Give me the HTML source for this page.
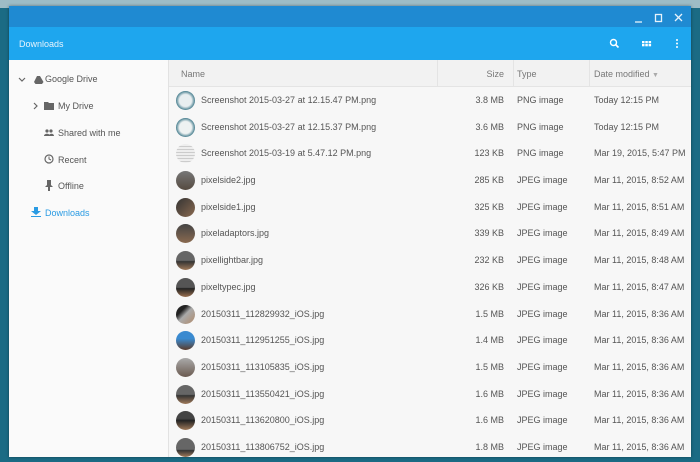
<!DOCTYPE html>
<html><head><style>
*{margin:0;padding:0;box-sizing:border-box}
body{width:700px;height:462px;overflow:hidden;background:#1b6b84;font-family:"Liberation Sans",sans-serif;position:relative}
.topbg{position:absolute;left:0;top:0;width:700px;height:8px;background:#9dbcc6}
.win{position:absolute;left:9px;top:6px;width:682px;height:451px;background:#f7f7f7;overflow:hidden;box-shadow:0 0 3px rgba(0,0,0,.4)}
.title{height:21px;background:#1f8ad2;position:relative}
.tool{height:33px;background:#1ea6ee;position:relative;color:#e8f4fd;font-size:9px}
.tool span{position:absolute;left:10px;top:12px}
.side{position:absolute;left:0;top:54px;width:160px;bottom:0;background:#fafafa;border-right:1px solid #e2e2e2;font-size:9px;color:#555}
.side div{position:absolute;white-space:nowrap}
.main{position:absolute;left:160px;top:54px;right:0;bottom:0}
.hdr{height:27px;background:#f2f2f2;border-bottom:1px solid #e4e4e4;position:relative;font-size:9px;color:#777}
.hdr div,.row div{position:absolute;white-space:nowrap}
.sep{width:1px;height:27px;background:#e4e4e4;top:0}
.row{height:26.7px;position:relative;font-size:9px;color:#555}
.th{left:7px;top:4px;width:19px;height:19px;border-radius:50%}
.n{left:32px;top:8px}.s{right:187px;top:8px}.t{left:348px;top:8px}.d{left:425px;top:8px}
</style></head><body>
<div class="topbg"></div>
<div class="win">
<div class="title">
<svg style="position:absolute;left:624px;top:7px" width="50" height="10" viewBox="0 0 50 10"><path d="M2 9h7" stroke="#e6f2fb" stroke-width="1.3"/><rect x="22.5" y="1.5" width="6" height="7" fill="none" stroke="#e6f2fb" stroke-width="1.3"/><path d="M42 1l7 7M49 1l-7 7" stroke="#e6f2fb" stroke-width="1.3"/></svg>
</div>
<div class="tool"><span>Downloads</span>
<svg style="position:absolute;left:600px;top:11px" width="80" height="12" viewBox="0 0 80 12"><circle cx="4.5" cy="4.5" r="3" fill="none" stroke="#fff" stroke-width="1.4"/><path d="M6.5 6.5l3 3" stroke="#fff" stroke-width="1.6"/><g fill="#fff"><rect x="33" y="3" width="2.5" height="2.3"/><rect x="36.3" y="3" width="2.5" height="2.3"/><rect x="39.6" y="3" width="2.5" height="2.3"/><rect x="33" y="6" width="2.5" height="2.3"/><rect x="36.3" y="6" width="2.5" height="2.3"/><rect x="39.6" y="6" width="2.5" height="2.3"/><circle cx="68" cy="2" r="1"/><circle cx="68" cy="5.5" r="1"/><circle cx="68" cy="9" r="1"/></g></svg>
</div>
<div class="side">
<svg style="position:absolute;left:9px;top:15px" width="30" height="10" viewBox="0 0 30 10"><path d="M1 3l3 3 3-3" fill="none" stroke="#666" stroke-width="1.2"/><path d="M19 1h3l3.5 6-1.5 2h-6.5L16 7z" fill="#666"/></svg>
<div style="left:36px;top:14px">Google Drive</div>
<svg style="position:absolute;left:23px;top:41px" width="30" height="10" viewBox="0 0 30 10"><path d="M2 2l3 3-3 3" fill="none" stroke="#666" stroke-width="1.2"/><path d="M12 1h4l1 1h5v7h-10z" fill="#666"/></svg>
<div style="left:49px;top:41px">My Drive</div>
<svg style="position:absolute;left:35px;top:69px" width="10" height="8" viewBox="0 0 10 8"><circle cx="3" cy="2" r="1.6" fill="#666"/><circle cx="7" cy="2" r="1.6" fill="#666"/><path d="M0 7c0-3 6-3 6 0zM5 7c0-3 5-3 5 0z" fill="#666"/></svg>
<div style="left:49px;top:68px">Shared with me</div>
<svg style="position:absolute;left:35px;top:94px" width="10" height="10"><circle cx="5" cy="5" r="4" fill="none" stroke="#666" stroke-width="1.2"/><path d="M5 2.5V5l2 1" fill="none" stroke="#666"/></svg>
<div style="left:49px;top:95px">Recent</div>
<svg style="position:absolute;left:36px;top:120px" width="8" height="11"><path d="M2 0h4v5l2 2H5v4H3V7H0l2-2z" fill="#666"/></svg>
<div style="left:49px;top:121px">Offline</div>
<svg style="position:absolute;left:22px;top:147px" width="10" height="10"><path d="M3 0h4v4h3L5 8 0 4h3zM0 9h10v1H0z" fill="#2a9be3"/></svg>
<div style="left:36px;top:148px;color:#2a9be3">Downloads</div>
</div>
<div class="main">
<div class="hdr"><div style="left:12px;top:9px">Name</div><div class="sep" style="left:268px"></div><div style="right:187px;top:9px">Size</div><div class="sep" style="left:344px"></div><div style="left:348px;top:9px">Type</div><div class="sep" style="left:420px"></div><div style="left:425px;top:9px">Date modified <span style="color:#aaa;font-size:7px">▼</span></div></div>
<div class="row"><div class="th" style="background:radial-gradient(#e8eef0 45%,#4a8090 70%,#ddd)"></div><div class="n">Screenshot 2015-03-27 at 12.15.47 PM.png</div><div class="s">3.8 MB</div><div class="t">PNG image</div><div class="d">Today 12:15 PM</div></div>
<div class="row"><div class="th" style="background:radial-gradient(#eef2f2 45%,#4a8090 70%,#ddd)"></div><div class="n">Screenshot 2015-03-27 at 12.15.37 PM.png</div><div class="s">3.6 MB</div><div class="t">PNG image</div><div class="d">Today 12:15 PM</div></div>
<div class="row"><div class="th" style="background:repeating-linear-gradient(#eee 0 2px,#ccc 2px 3px)"></div><div class="n">Screenshot 2015-03-19 at 5.47.12 PM.png</div><div class="s">123 KB</div><div class="t">PNG image</div><div class="d">Mar 19, 2015, 5:47 PM</div></div>
<div class="row"><div class="th" style="background:linear-gradient(#777,#554a40)"></div><div class="n">pixelside2.jpg</div><div class="s">285 KB</div><div class="t">JPEG image</div><div class="d">Mar 11, 2015, 8:52 AM</div></div>
<div class="row"><div class="th" style="background:linear-gradient(135deg,#333,#8a6a50)"></div><div class="n">pixelside1.jpg</div><div class="s">325 KB</div><div class="t">JPEG image</div><div class="d">Mar 11, 2015, 8:51 AM</div></div>
<div class="row"><div class="th" style="background:linear-gradient(#444,#8a6a50)"></div><div class="n">pixeladaptors.jpg</div><div class="s">339 KB</div><div class="t">JPEG image</div><div class="d">Mar 11, 2015, 8:49 AM</div></div>
<div class="row"><div class="th" style="background:linear-gradient(#666 50%,#333 55%,#a07a5a)"></div><div class="n">pixellightbar.jpg</div><div class="s">232 KB</div><div class="t">JPEG image</div><div class="d">Mar 11, 2015, 8:48 AM</div></div>
<div class="row"><div class="th" style="background:linear-gradient(#555 50%,#222 55%,#9a7050)"></div><div class="n">pixeltypec.jpg</div><div class="s">326 KB</div><div class="t">JPEG image</div><div class="d">Mar 11, 2015, 8:47 AM</div></div>
<div class="row"><div class="th" style="background:linear-gradient(135deg,#222 30%,#aaa 50%,#b08a6a)"></div><div class="n">20150311_112829932_iOS.jpg</div><div class="s">1.5 MB</div><div class="t">JPEG image</div><div class="d">Mar 11, 2015, 8:36 AM</div></div>
<div class="row"><div class="th" style="background:linear-gradient(#3a8ad0 40%,#5a3a2a)"></div><div class="n">20150311_112951255_iOS.jpg</div><div class="s">1.4 MB</div><div class="t">JPEG image</div><div class="d">Mar 11, 2015, 8:36 AM</div></div>
<div class="row"><div class="th" style="background:linear-gradient(#aaa,#6a5a50)"></div><div class="n">20150311_113105835_iOS.jpg</div><div class="s">1.5 MB</div><div class="t">JPEG image</div><div class="d">Mar 11, 2015, 8:36 AM</div></div>
<div class="row"><div class="th" style="background:linear-gradient(#666 50%,#333 55%,#a07a5a)"></div><div class="n">20150311_113550421_iOS.jpg</div><div class="s">1.6 MB</div><div class="t">JPEG image</div><div class="d">Mar 11, 2015, 8:36 AM</div></div>
<div class="row"><div class="th" style="background:linear-gradient(#444 40%,#222 50%,#a07a5a)"></div><div class="n">20150311_113620800_iOS.jpg</div><div class="s">1.6 MB</div><div class="t">JPEG image</div><div class="d">Mar 11, 2015, 8:36 AM</div></div>
<div class="row"><div class="th" style="background:linear-gradient(#666 60%,#333 65%,#a07a5a)"></div><div class="n">20150311_113806752_iOS.jpg</div><div class="s">1.8 MB</div><div class="t">JPEG image</div><div class="d">Mar 11, 2015, 8:36 AM</div></div>
</div>
</div>
</body></html>
